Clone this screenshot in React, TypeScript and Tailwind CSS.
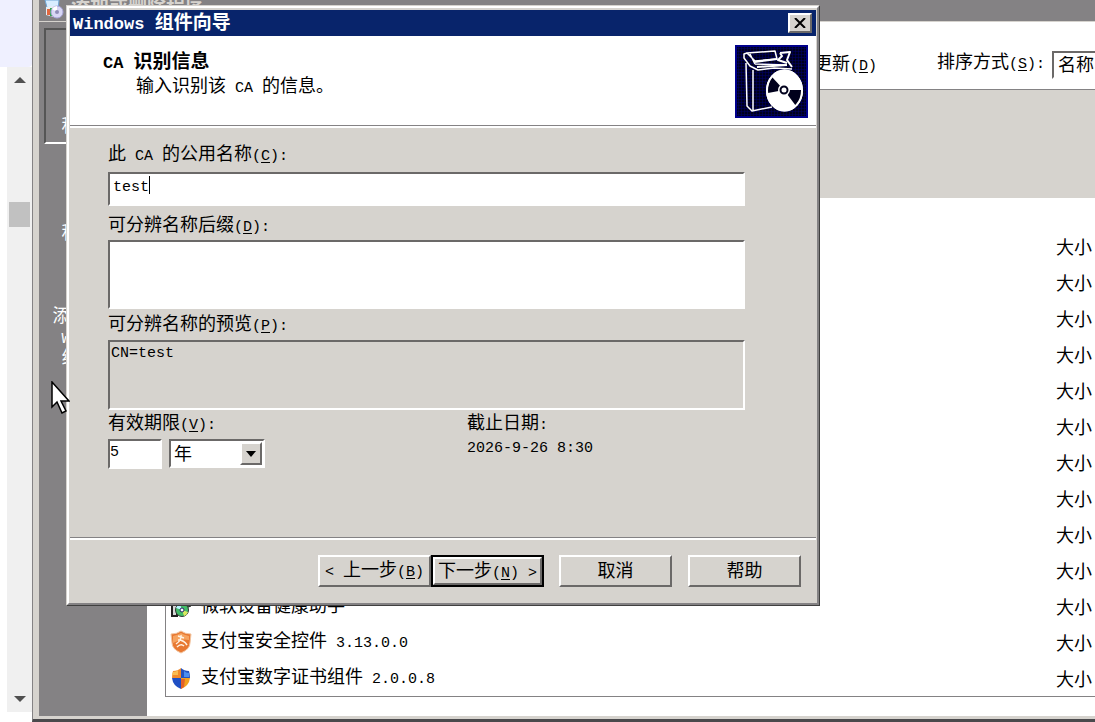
import { useState } from "react";

const raised = "border-2 border-t-white border-l-white border-b-[#6b6968] border-r-[#6b6968]";
const sunken = "border-2 border-t-[#6b6968] border-l-[#6b6968] border-b-white border-r-white";

const programs = [
  ...Array.from({ length: 10 }, (_, i) => ({ id: i, name: "", icon: "" })),
  { id: 10, name: "微软设备健康助手", icon: "setup" },
  { id: 11, name: "支付宝安全控件 3.13.0.0", icon: "alipay" },
  { id: 12, name: "支付宝数字证书组件 2.0.0.8", icon: "shield" },
];

// Latin runs are set in a half-width face, "&X" underlines the access key
function Text({ children, bold = false }: { children: string; bold?: boolean }) {
  const parts = children.split(/([\x20-\x7e]+)/).filter(Boolean);
  return (
    <span className={bold ? "whitespace-pre text-[19px] font-bold" : "whitespace-pre text-[18px]"}>
      {parts.map((part, i) => {
        if (!/^[\x20-\x7e]/.test(part)) return part;
        const [before, after] = part.split("&");
        return (
          <span
            key={i}
            className={
              bold
                ? "font-['Liberation_Mono',monospace] text-[17px]"
                : "font-['Liberation_Mono',monospace] text-[15px]"
            }
          >
            {before}
            {after && <u className="underline-offset-2">{after[0]}</u>}
            {after && after.slice(1)}
          </span>
        );
      })}
    </span>
  );
}

function ProgramIcon({ kind }: { kind: string }) {
  if (kind === "setup") {
    return (
      <svg viewBox="0 0 22 24" className="h-6 w-[22px]">
        <path d="M2 2h5v20H2z" fill="#d8d8d8" stroke="#222" strokeWidth="2" />
        <path d="M7 4h14v8l-5 2H7z" fill="#277a46" stroke="#222" />
        <circle cx="12" cy="16" r="6.5" fill="#42bd67" stroke="#333" />
        <path d="M12 16 6 14a6 6 0 0 1 4-4z" fill="#b9f3ff" />
        <path d="m12 16 6 2a6 6 0 0 1-4 4z" fill="#d8e95e" />
        <circle cx="12" cy="16" r="2" fill="#fff" stroke="#226" />
      </svg>
    );
  }
  if (kind === "alipay") {
    return (
      <svg viewBox="0 0 22 24" className="h-6 w-[22px]">
        <path d="M1 4q6 0 10-3 4 3 10 3l-1 9q0 6-9 10-9-4-9-10z" fill="#e87932" stroke="#f2c5a1" />
        <path d="M3 6q5-1 8-3 3 2 8 3v4Q11 8 3 13z" fill="#f6a35f" />
        <path
          d="m8 6 6 2M11 5q1 5-5 9M8 10q6 0 9 5M7 17q4-4 7-1"
          fill="none"
          stroke="#fff3e4"
          strokeWidth="1.5"
        />
      </svg>
    );
  }
  if (kind === "shield") {
    return (
      <svg viewBox="0 0 22 24" className="h-6 w-[22px]">
        <path d="M11 2v10H2q0-4 1-7 5 0 8-3" fill="#f08a2c" />
        <path d="M11 2v10h9q0-4-1-7-5 0-8-3" fill="#2452c0" />
        <path d="M2 12h9v11q-8-3-9-11" fill="#1f4fc4" />
        <path d="M11 12h9q-1 8-9 11z" fill="#f2a11f" />
        <path d="M3 6q3 0 5-2v5H2z" fill="#f9bd53" />
        <path d="M14 5q2 2 5 2v4h-5z" fill="#4b8ef0" />
        <path d="M11 13h4l-1 8-3 2z" fill="#e2622a" />
      </svg>
    );
  }
  return <span className="w-[22px]" />;
}

function InstallerIcon() {
  return (
    <svg viewBox="0 0 73 73" className="h-[73px] w-[73px] shrink-0">
      <defs>
        <pattern id="grid" width="3" height="3" patternUnits="userSpaceOnUse">
          <path d="M0 0h3M0 0v3" stroke="#00006c" strokeWidth="1" />
        </pattern>
      </defs>
      <rect width="73" height="73" fill="#00001c" />
      <rect width="73" height="73" fill="url(#grid)" />
      <rect x="1" y="1" width="71" height="71" fill="none" stroke="#00008c" strokeWidth="2" />
      <g fill="none" stroke="#fff" strokeWidth="1.5" strokeLinejoin="round">
        <path d="m11 18 1 43 5 5 20-4M18 25v40" />
        <path d="M12 8 9 9v4l6 8 8 4 16-2 18 1" />
        <path d="m12 8 28-2 2 8-22 2zM15 9l5 10M20 19l31 1" />
        <path d="m45 8 10-1-3 8 5 7M45 8l2 3-4 4 9 3" strokeWidth="2" />
        <path d="m20 17 22-3M22 22l30-2" strokeWidth="2" />
      </g>
      <ellipse cx="49.5" cy="45.5" rx="18.5" ry="21" fill="#fff" />
      <path d="m49 45-16 3q-1-9 4-16z" fill="#00001c" />
      <path d="M49 45h18q0 9-6 16z" fill="#00001c" />
      <ellipse cx="49.5" cy="45.5" rx="17.5" ry="20" fill="none" stroke="#fff" strokeWidth="2" />
      <circle cx="49" cy="45" r="6" fill="#fff" />
      <circle cx="49" cy="45" r="3.5" fill="#fff" stroke="#00001c" strokeWidth="2" />
    </svg>
  );
}

function PageScrollbar() {
  return (
    <div className="flex w-8 shrink-0 flex-col pb-[10px]">
      <div className="h-[67px] rounded-br bg-[#eff0ff]" />
      <div className="ml-[7px] flex flex-1 flex-col items-center bg-[#f0f0f0] pt-[10px] pb-[10px]">
        <svg viewBox="0 0 12 6" className="h-[6px] w-3">
          <path d="m6 0 6 6H0z" fill="#505050" />
        </svg>
        <div className="mt-[119px] h-[25px] w-[21px] bg-[#c1c1c1]" />
        <svg viewBox="0 0 12 6" className="mt-auto h-[6px] w-3">
          <path d="m6 6 6-6H0z" fill="#505050" />
        </svg>
      </div>
    </div>
  );
}

function Sidebar() {
  const item = "flex flex-col items-center justify-end leading-[18px] text-white";
  return (
    <nav className="flex w-[108px] shrink-0 flex-col bg-[#848284] pt-[6px]">
      <button
        className={`${item} ml-[5px] mr-[5px] h-[116px] border-2 border-t-[#555] border-l-[#555] border-r-white border-b-white pb-1`}
      >
        <Text>更改或</Text>
        <Text>删除</Text>
        <Text>程序(&H)</Text>
      </button>
      <button className={`${item} h-[105px] pb-1`}>
        <Text>添加新</Text>
        <Text>程序(&N)</Text>
      </button>
      <button className={`${item} h-[125px] pb-1`}>
        <Text>添加/删除</Text>
        <Text>Windows</Text>
        <Text>组件(&A)</Text>
      </button>
    </nav>
  );
}

function ProgramsWindow() {
  return (
    <div className="flex min-w-0 flex-1 flex-col border-l border-b-[3px] border-l-[#848284] border-b-[#4a494c]">
      <div className="flex flex-1 flex-col border-l-[6px] border-b-[3px] border-[#d6d3ce]">
        <header className="flex h-[22px] items-start gap-[6px] overflow-hidden border-b border-[#d6d3ce] bg-[#848284] pl-1 leading-[14px] text-[#d6d3ce]">
          <svg viewBox="0 0 22 20" className="h-5 w-[22px]">
            <path d="M2 0h14l-1 10-10 1z" fill="#d8edff" stroke="#6fa6d5" />
            <path d="m3 7 8-1v11l-8-2z" fill="#e8edf2" />
            <path d="M4 9h3v6H4z" fill="#e26840" />
            <path d="M7 8h3v8H7z" fill="#35a653" />
            <circle cx="14" cy="12" r="6" fill="#d8d7f5" stroke="#a9a6dc" />
            <path d="m14 12-5-3a6 6 0 0 1 5-3z" fill="#fff" />
            <circle cx="14" cy="12" r="2" fill="#8f8db8" />
          </svg>
          <Text bold>添加或删除程序</Text>
        </header>
        <div className="flex flex-1">
          <Sidebar />
          <main className="flex min-w-0 flex-1 flex-col bg-white">
            <div className="flex h-[67px] items-center justify-end overflow-hidden pt-[18px]">
              <label className="mr-[60px] flex shrink-0 items-center gap-2">
                <input type="checkbox" />
                <Text>显示更新(&D)</Text>
              </label>
              <label htmlFor="sort" className="mr-[7px] shrink-0 pb-1">
                <Text>排序方式(&S):</Text>
              </label>
              <div className="w-[43px] shrink-0 overflow-hidden">
                <select
                  id="sort"
                  className={`${sunken} block h-7 w-[160px] appearance-none bg-white pl-1 text-[18px] leading-none`}
                >
                  <option>名称</option>
                  <option>大小</option>
                </select>
              </div>
            </div>
            <section className="ml-[18px] mb-[18px] border-l border-b border-t border-[#848284]">
              <div className="h-[108px] bg-[#d6d3ce]" />
              <ul className="pt-[30px]">
                {programs.map((p) => (
                  <li key={p.id} className="flex h-9 items-center pt-1 pl-1">
                    <div className="flex items-center gap-[9px] pb-1">
                      <ProgramIcon kind={p.icon} />
                      <Text>{p.name}</Text>
                    </div>
                    <span className="ml-auto pr-[3px]">
                      <Text>大小</Text>
                    </span>
                  </li>
                ))}
              </ul>
            </section>
          </main>
        </div>
      </div>
    </div>
  );
}

function WizardDialog() {
  const [name, setName] = useState("test");
  const [suffix, setSuffix] = useState("");
  const [years, setYears] = useState("5");
  const preview = suffix ? `CN=${name},${suffix}` : `CN=${name}`;
  const mono = "font-['Liberation_Mono',monospace] text-[15px]";
  const button = "h-8 w-[113px] bg-[#d6d3ce] leading-6";

  return (
    <div
      role="dialog"
      aria-labelledby="wizard-title"
      className="absolute top-[5px] left-[66px] w-[754px] border border-[#d6d3ce] border-r-[#404040] border-b-[#404040] bg-[#d6d3ce]"
    >
      <div className="border-2 border-t-white border-l-white border-r-[#848284] border-b-[#848284] px-px pt-[2px]">
        <div className="flex h-[26px] items-center justify-between bg-[#08246b] pl-[3px] pr-1 leading-6 text-white">
          <h1 id="wizard-title" className="pt-[2px]">
            <Text bold>Windows 组件向导</Text>
          </h1>
          <button aria-label="关闭" className={`${raised} flex h-5 w-6 items-center justify-center bg-[#d6d3ce]`}>
            <svg viewBox="0 0 12 10" className="h-[10px] w-3">
              <path d="m1 0 10 10M11 0 1 10" stroke="#000" strokeWidth="2" />
            </svg>
          </button>
        </div>

        <div className="flex h-[90px] items-start justify-between border-b border-[#848284] bg-white pt-[9px] pr-2 pl-[33px]">
          <div className="flex flex-col pt-[6px] leading-[22px]">
            <h2>
              <Text bold>CA 识别信息</Text>
            </h2>
            <p className="pl-[33px]">
              <Text>输入识别该 CA 的信息。</Text>
            </p>
          </div>
          <InstallerIcon />
        </div>

        <form className="border-t-2 border-white pt-[14px] pr-[71px] pl-[38px] leading-6">
          <label htmlFor="ca-name" className="block h-[30px]">
            <Text>此 CA 的公用名称(&C):</Text>
          </label>
          <div className="relative">
            <input
              id="ca-name"
              value={name}
              onChange={(e) => setName(e.target.value)}
              className={`${sunken} ${mono} block h-[34px] w-full bg-white pb-1 pl-[3px] outline-none`}
            />
            <span className="absolute top-1 left-[41px] h-[18px] w-px bg-black" />
          </div>

          <label htmlFor="suffix" className="mt-[7px] block h-[27px]">
            <Text>可分辨名称后缀(&D):</Text>
          </label>
          <textarea
            id="suffix"
            value={suffix}
            onChange={(e) => setSuffix(e.target.value)}
            className={`${sunken} ${mono} block h-[69px] w-full resize-none bg-white pl-[3px] outline-none`}
          />

          <label htmlFor="preview" className="mt-[3px] block h-7">
            <Text>可分辨名称的预览(&P):</Text>
          </label>
          <textarea
            id="preview"
            readOnly
            value={preview}
            className={`${sunken} ${mono} block h-[70px] w-full resize-none bg-[#d6d3ce] pl-px leading-6 outline-none`}
          />

          <div className="grid grid-cols-[359px_1fr] pt-px">
            <div>
              <label htmlFor="years" className="block h-7">
                <Text>有效期限(&V):</Text>
              </label>
              <div className="flex gap-[7px]">
                <input
                  id="years"
                  value={years}
                  onChange={(e) => setYears(e.target.value)}
                  className={`${sunken} ${mono} h-[30px] w-[54px] bg-white pb-1 outline-none`}
                />
                <div className="relative">
                  <select
                    aria-label="单位"
                    className={`${sunken} h-[29px] w-24 appearance-none bg-white pl-[3px] text-[18px] leading-none`}
                  >
                    <option>年</option>
                    <option>月</option>
                  </select>
                  <span
                    className={`${raised} pointer-events-none absolute top-[3px] right-[3px] flex h-[23px] w-[22px] items-center justify-center bg-[#d6d3ce]`}
                  >
                    <svg viewBox="0 0 10 6" className="h-[6px] w-[10px]">
                      <path d="M0 0h10L5 6z" />
                    </svg>
                  </span>
                </div>
              </div>
            </div>
            <div className="flex flex-col pt-[2px] leading-5">
              <Text>截止日期:</Text>
              <Text>2026-9-26 8:30</Text>
            </div>
          </div>
        </form>

        <footer className="mt-[68px] flex justify-end border-t border-[#848284] pr-[15px] pb-4 shadow-[inset_0_2px_0_#fff]">
          <div className="flex pt-[17px]">
            <button className={`${raised} ${button}`}>
              <Text>{"< 上一步(&B)"}</Text>
            </button>
            <button className="mr-[15px] border-2 border-black">
              <span className="block h-7 w-[109px] border-2 border-t-white border-l-white border-r-[#6b6968] border-b-[#6b6968] leading-6">
                <Text>{"下一步(&N) >"}</Text>
              </span>
            </button>
            <button className={`${raised} ${button} mr-4`}>
              <Text>取消</Text>
            </button>
            <button className={`${raised} ${button}`}>
              <Text>帮助</Text>
            </button>
          </div>
        </footer>
      </div>
    </div>
  );
}

export default function App() {
  return (
    <div className="relative flex min-h-screen overflow-hidden bg-white font-['Liberation_Sans','Noto_Sans_CJK_SC',sans-serif] text-black">
      <PageScrollbar />
      <ProgramsWindow />
      <WizardDialog />
      <svg viewBox="0 0 19 33" className="pointer-events-none absolute top-[381px] left-[51px] h-[33px] w-[19px]">
        <path d="M1 1v25l5-5 5 11 4-2-5-10h8z" fill="#fff" stroke="#000" strokeWidth="1.5" />
      </svg>
    </div>
  );
}
